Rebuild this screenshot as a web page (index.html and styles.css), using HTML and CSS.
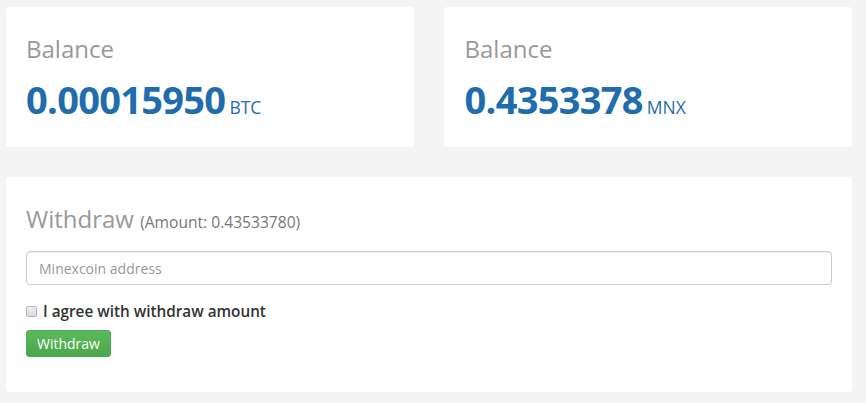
FILE: index.html
```html
<!DOCTYPE html>
<html>
<head>
<meta charset="utf-8">
<link rel="stylesheet" href="styles.css">
</head>
<body>
<div class="page">
  <div class="row">
    <div class="card balance">
      <div class="label">Balance</div>
      <div class="value"><span class="num">0.00015950</span><span class="cur">BTC</span></div>
    </div>
    <div class="card balance">
      <div class="label">Balance</div>
      <div class="value"><span class="num">0.4353378</span><span class="cur">MNX</span></div>
    </div>
  </div>
  <div class="card withdraw">
    <div class="title">Withdraw <small>(Amount: 0.43533780)</small></div>
    <input class="address" type="text" placeholder="Minexcoin address">
    <label class="agree"><input class="check" type="checkbox"><span>I agree with withdraw amount</span></label>
    <button class="btn">Withdraw</button>
  </div>
</div>
</body>
</html>
```
FILE: styles.css
```css
* { box-sizing: border-box; }
html, body { margin: 0; padding: 0; }
body {
  background: #f4f4f4;
  font-family: "Open Sans", "Liberation Sans", sans-serif;
  color: #333;
}
.page {
  padding: 7px 14px 0 6px;
  display: flex;
  flex-direction: column;
  gap: 30px;
}
.row {
  display: flex;
  gap: 30px;
}
.card {
  background: #fff;
  border-radius: 4px;
}
.balance {
  flex: 1;
  height: 140px;
  padding: 26px 20px 0 20px;
}
.balance:last-child { padding-left: 21px; }
.label {
  font-size: 24px;
  line-height: 32px;
  color: #999;
}
.value {
  margin-top: 11px;
  display: flex;
  align-items: baseline;
  color: #1f6dac;
}
.num {
  font-size: 38px;
  font-weight: 700;
  line-height: 46px;
  letter-spacing: -0.7px;
}
.cur {
  font-size: 17.5px;
  margin-left: 4px;
}
.withdraw {
  height: 215px;
  padding: 25px 20px 0 20px;
  display: flex;
  flex-direction: column;
  align-items: flex-start;
}
.title {
  font-size: 24px;
  line-height: 34px;
  color: #999;
}
.title small {
  font-size: 15.6px;
  color: #777;
}
.address {
  margin-top: 12px;
  width: 100%;
  height: 34px;
  border: 1px solid #ccc;
  border-radius: 4px;
  padding: 6px 12px;
  font-family: inherit;
  font-size: 14px;
  color: #555;
  box-shadow: inset 0 1px 1px rgba(0,0,0,.075);
}
.address::placeholder { color: #999; }
.agree {
  margin-top: 15px;
  display: flex;
  align-items: center;
  font-size: 15.3px;
  font-weight: 600;
  color: #333;
  line-height: 22px;
}
.check {
  appearance: none;
  -webkit-appearance: none;
  margin: 0 6px 0 0;
  width: 11px;
  height: 11px;
  border: 1px solid #b5b5b5;
  border-radius: 2px;
  background: linear-gradient(#f0f0f0, #dcdcdc);
}
.btn {
  margin-top: 8px;
  height: 27px;
  padding: 0 10px;
  border: 1px solid #4cae4c;
  border-radius: 3px;
  background: linear-gradient(#5cb85c, #4aa84a);
  color: #fff;
  font-family: inherit;
  font-size: 14px;
}
```
